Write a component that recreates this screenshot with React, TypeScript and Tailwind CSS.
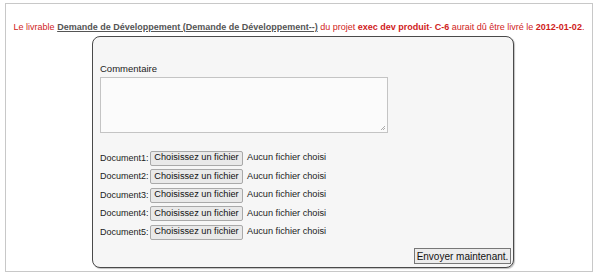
const docs = [1, 2, 3, 4, 5];

export default function App() {
  return (
    <div className="h-[275px] w-[600px] bg-white pl-[5px] pt-[3px] font-['Liberation_Sans',Arial,sans-serif]">
      <div className="flex h-[269px] w-[588px] flex-col border border-[#c8c8c8] bg-white">
        <p className="mt-[16px] whitespace-nowrap text-center text-[9px] leading-[14px] text-[#d01c1c]">
          Le livrable{" "}
          <a className="font-bold text-[#555] underline">
            Demande de Développement (Demande de Développement--)
          </a>{" "}
          du projet <b>exec dev produit</b>- <b>C-6</b> aurait dû être livré le <b>2012-01-02</b>.
        </p>

        <div className="ml-[86px] mt-[2px] flex h-[232px] w-[422px] flex-col rounded-[8px] border border-[#4a4a4a] bg-[#f6f6f6] pl-[7px] pr-[2px] shadow-[1px_1px_1px_rgba(0,0,0,0.25)]">
          <label className="mt-[26px] text-[9.5px] leading-[12px] text-[#222]">Commentaire</label>
          <div className="relative mt-[2px] h-[56px] w-[288px] border border-[#c4c4c4] bg-[#fbfbfb]">
            <svg className="absolute bottom-[1px] right-[1px]" width="6" height="6" viewBox="0 0 6 6">
              <path d="M5 1 L1 5 M5 3 L3 5" stroke="#999" strokeWidth="0.8" />
            </svg>
          </div>

          <div className="mt-[17px] flex flex-col gap-[2px]">
            {docs.map((n) => (
              <div key={n} className="flex h-[16.5px] items-center text-[9px] text-[#222]">
                <span className="w-[50px]">Document{n}:</span>
                <span className="flex h-[15px] w-[93px] items-center justify-center rounded-[2px] border border-[#a9a9a9] bg-[#e9e9e9] text-[9.2px] text-[#111]">
                  Choisissez un fichier
                </span>
                <span className="ml-[4px] text-[9.2px]">Aucun fichier choisi</span>
              </div>
            ))}
          </div>

          <div className="mb-[3px] mt-auto flex justify-end">
            <span className="flex h-[16px] w-[97px] items-center justify-center border border-[#777] bg-[#ececec] text-[10px] text-[#111]">
              Envoyer maintenant.
            </span>
          </div>
        </div>
      </div>
    </div>
  );
}
